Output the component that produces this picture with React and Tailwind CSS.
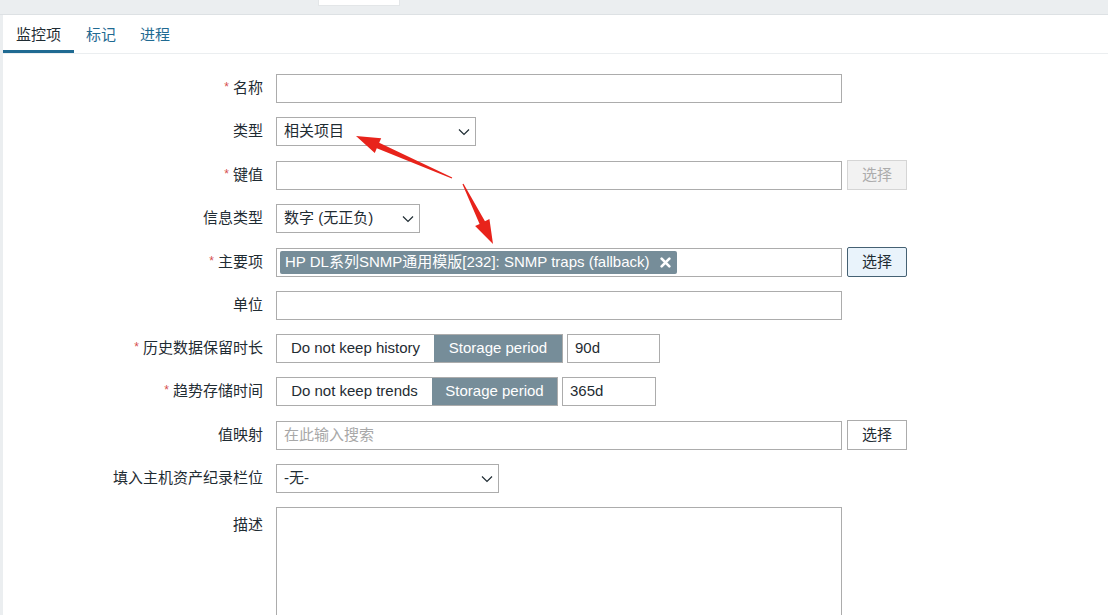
import React from "react";

const font = { fontFamily: '"Liberation Sans", "Noto Sans CJK SC", sans-serif' };

// tapered annotation arrow, points computed from tail -> tip
const arrowPoints = (tx, ty, px, py, head = 24, headW = 16, shaftW = 6) => {
  const dx = px - tx;
  const dy = py - ty;
  const len = Math.hypot(dx, dy);
  const ux = dx / len;
  const uy = dy / len;
  const nx = -uy;
  const ny = ux;
  const bx = px - ux * head;
  const by = py - uy * head;
  const pts = [
    [tx + nx * 0.6, ty + ny * 0.6],
    [bx + nx * (shaftW / 2), by + ny * (shaftW / 2)],
    [bx + nx * (headW / 2), by + ny * (headW / 2)],
    [px, py],
    [bx - nx * (headW / 2), by - ny * (headW / 2)],
    [bx - nx * (shaftW / 2), by - ny * (shaftW / 2)],
    [tx - nx * 0.6, ty - ny * 0.6],
  ];
  return pts.map((p) => p.join(",")).join(" ");
};

const Chevron = () => (
  <svg width="12" height="8" viewBox="0 0 12 8" className="shrink-0">
    <path d="M1 1.5 L6 6.5 L11 1.5" fill="none" stroke="#1f2c33" strokeWidth="1.2" />
  </svg>
);

const Row = ({ label, required, top, children }) => (
  <div className="flex">
    <div className={`w-[273px] shrink-0 flex justify-end pr-[13px] text-[15px] text-[#1f2c33] ${top ? "items-start pt-[7px]" : "items-center"}`}>
      {required && <span className="text-[#d64e4e] text-[12px] mr-[4px] -mt-[3px]">*</span>}
      <span>{label}</span>
    </div>
    <div className="flex items-center gap-[5px]">{children}</div>
  </div>
);

const Input = ({ w = "w-[566px]", value, placeholder }) => (
  <div className={`${w} h-[29px] border border-[#acacac] bg-white flex items-center px-[7px] text-[15px] text-[#1f2c33]`}>
    {value}
    {placeholder && <span className="text-[#a8a8a8]">{placeholder}</span>}
  </div>
);

const Select = ({ w, value }) => (
  <div className={`${w} h-[29px] border border-[#acacac] bg-white flex items-center justify-between pl-[7px] pr-[5px] text-[15px] text-[#1f2c33]`}>
    <span>{value}</span>
    <Chevron />
  </div>
);

const Btn = ({ kind }) => {
  const cls =
    kind === "disabled"
      ? "bg-[#f2f2f2] border-[#d5d5d5] text-[#acacac]"
      : kind === "focus"
      ? "bg-[#e9f3fb] border-[#456173] text-[#1f2c33] rounded-[2px]"
      : "bg-white border-[#acacac] text-[#1f2c33]";
  return (
    <div className={`w-[60px] h-[30px] border flex items-center justify-center text-[15px] ${cls}`}>选择</div>
  );
};

const Segmented = ({ first, firstW, secondW, value, valueW }) => (
  <>
    <div className="flex h-[29px] border border-[#acacac] text-[15px]">
      <div className={`${firstW} flex items-center justify-center text-[#1f2c33] bg-white`}>{first}</div>
      <div className={`${secondW} flex items-center justify-center text-white bg-[#768d99]`}>Storage period</div>
    </div>
    <div className={`${valueW} -ml-[1px] h-[29px] border border-[#acacac] bg-white flex items-center px-[7px] text-[15px] text-[#1f2c33]`}>{value}</div>
  </>
);

export default function App() {
  return (
    <div className="relative w-[1108px] h-[615px] overflow-hidden bg-[#ebeef0]" style={font}>
      <div className="h-[15px] border-b border-[#dde1e4] flex">
        <div className="ml-[318px] w-[82px] h-[6px] bg-white border border-[#e3e6e8] border-t-0" />
      </div>
      <div className="ml-[3px] h-[600px] bg-white">
        <div className="flex h-[39px] border-b border-[#ebeef0] text-[15px]">
          <div className="px-[13px] flex items-center text-[#1f2c33] border-b-[3px] border-[#1f6a92] pt-[5px]">监控项</div>
          <div className="px-[12px] flex items-center text-[#1f6a92] pt-[2px]">标记</div>
          <div className="px-[12px] flex items-center text-[#1f6a92] pt-[2px]">进程</div>
        </div>
        <div className="pt-[20px] flex flex-col gap-[14px]">
          <Row label="名称" required>
            <Input />
          </Row>
          <Row label="类型">
            <Select w="w-[200px]" value="相关项目" />
          </Row>
          <Row label="键值" required>
            <Input />
            <Btn kind="disabled" />
          </Row>
          <Row label="信息类型">
            <Select w="w-[144px]" value="数字 (无正负)" />
          </Row>
          <Row label="主要项" required>
            <div className="w-[566px] h-[29px] border border-[#acacac] bg-white flex items-center px-[3px]">
              <div className="h-[23px] bg-[#768d99] text-white text-[15px] flex items-center pl-[5px] pr-[6px] gap-[10px] rounded-[2px]">
                <span>HP DL系列SNMP通用模版[232]: SNMP traps (fallback)</span>
                <svg width="11" height="11" viewBox="0 0 10 10">
                  <path d="M1.5 1.5 L8.5 8.5 M8.5 1.5 L1.5 8.5" stroke="white" strokeWidth="2.4" strokeLinecap="round" />
                </svg>
              </div>
            </div>
            <Btn kind="focus" />
          </Row>
          <Row label="单位">
            <Input />
          </Row>
          <Row label="历史数据保留时长" required>
            <Segmented first="Do not keep history" firstW="w-[157px]" secondW="w-[128px]" value="90d" valueW="w-[93px]" />
          </Row>
          <Row label="趋势存储时间" required>
            <Segmented first="Do not keep trends" firstW="w-[155px]" secondW="w-[125px]" value="365d" valueW="w-[94px]" />
          </Row>
          <Row label="值映射">
            <Input placeholder="在此输入搜索" />
            <Btn />
          </Row>
          <Row label="填入主机资产纪录栏位">
            <Select w="w-[223px]" value="-无-" />
          </Row>
          <Row label="描述" top>
            <div className="w-[566px] h-[120px] border border-[#acacac] bg-white" />
          </Row>
        </div>
      </div>
      <svg className="absolute inset-0 pointer-events-none" width="1108" height="615">
        <polygon points={arrowPoints(452, 178, 356, 136)} fill="#e8231b" />
        <polygon points={arrowPoints(463, 184, 493, 244)} fill="#e8231b" />
      </svg>
    </div>
  );
}
